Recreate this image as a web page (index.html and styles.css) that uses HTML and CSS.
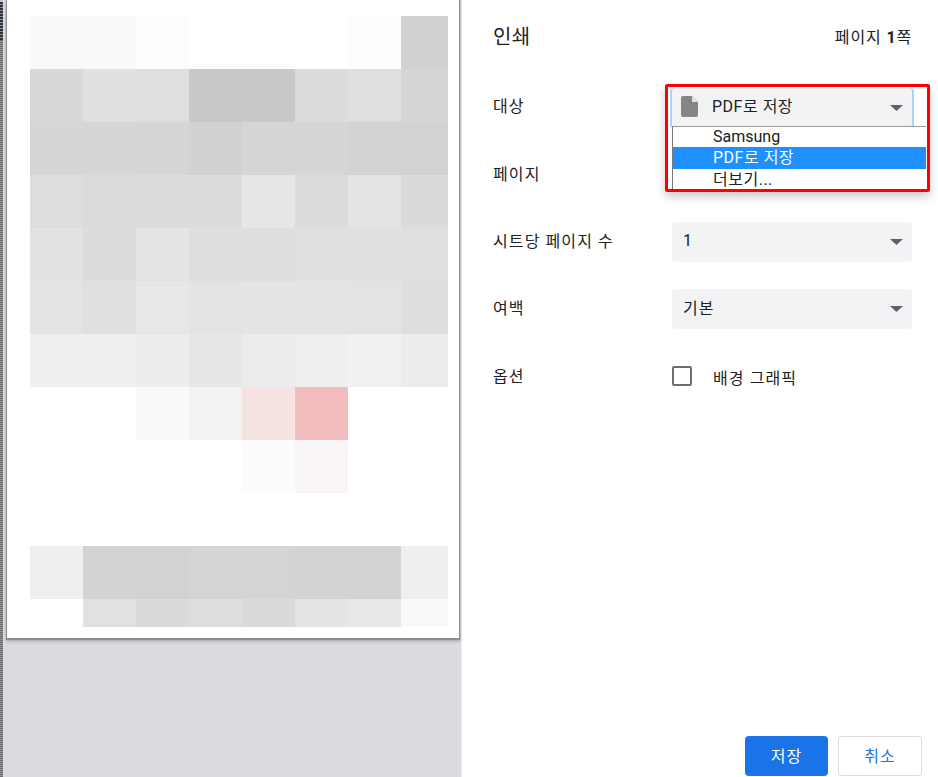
FILE: index.html
```html
<!DOCTYPE html>
<html lang="ko">
<head>
<meta charset="utf-8">
<title>인쇄</title>
<link rel="stylesheet" href="styles.css">
</head>
<body>
<div class="app">
  <div class="rail"><div class="rail-top"></div></div>
  <main class="preview">
    <div class="sheet">
      <div class="mosaic">
        <i class="c-f8 dots"></i><i class="c-fa dots"></i><i class="c-fd"></i><i class="c-ff"></i><i class="c-ff"></i><i class="c-ff"></i><i class="c-fd"></i><i class="c-d1"></i>
        <i class="c-d8"></i><i class="c-df dots"></i><i class="c-de dots"></i><i class="c-c9"></i><i class="c-c9"></i><i class="c-dc"></i><i class="c-de dots"></i><i class="c-d5"></i>
        <i class="c-d6"></i><i class="c-d6"></i><i class="c-d6"></i><i class="c-d0 dots"></i><i class="c-d6"></i><i class="c-d6"></i><i class="c-d3"></i><i class="c-d1 dots"></i>
        <i class="c-dd"></i><i class="c-db"></i><i class="c-dc"></i><i class="c-dc"></i><i class="c-e6 dots"></i><i class="c-db"></i><i class="c-e3 dots"></i><i class="c-da"></i>
        <i class="c-e1 dots"></i><i class="c-dc"></i><i class="c-e3 dots"></i><i class="c-de"></i><i class="c-de"></i><i class="c-e0"></i><i class="c-e0"></i><i class="c-df"></i>
        <i class="c-e4"></i><i class="c-df"></i><i class="c-e7 dots"></i><i class="c-e3"></i><i class="c-e4"></i><i class="c-e4"></i><i class="c-e3"></i><i class="c-de"></i>
        <i class="c-ef dots"></i><i class="c-ee dots"></i><i class="c-ed"></i><i class="c-e6 dots"></i><i class="c-ec dots"></i><i class="c-ee dots"></i><i class="c-f1 dots"></i><i class="c-ec dots"></i>
        <i class="c-ff"></i><i class="c-ff"></i><i class="c-pa dots"></i><i class="c-pb dots"></i><i class="c-pc dots"></i><i class="c-pd"></i><i class="c-ff"></i><i class="c-ff"></i>
        <i class="c-ff"></i><i class="c-ff"></i><i class="c-ff"></i><i class="c-ff"></i><i class="c-fc"></i><i class="c-pe dots"></i><i class="c-ff"></i><i class="c-ff"></i>
        <i class="c-ff"></i><i class="c-ff"></i><i class="c-ff"></i><i class="c-ff"></i><i class="c-ff"></i><i class="c-ff"></i><i class="c-ff"></i><i class="c-ff"></i>
        <i class="c-ee dots"></i><i class="c-d3"></i><i class="c-d1 dots"></i><i class="c-d4"></i><i class="c-d4"></i><i class="c-d3"></i><i class="c-d3"></i><i class="c-ef dots"></i>
        <i class="c-ff"></i><i class="c-e0 dots"></i><i class="c-da"></i><i class="c-de"></i><i class="c-da"></i><i class="c-e4 dots"></i><i class="c-e8 dots"></i><i class="c-f8 dots"></i>
      </div>
    </div>
  </main>
  <aside class="panel">
    <header class="head">
      <h1 class="title">인쇄</h1>
      <p class="count">페이지 <b>1</b>쪽</p>
    </header>
    <div class="rows">
      <span class="label label-first">대상</span>
      <div class="select select-dest">
        <svg class="file" width="17" height="21" viewBox="0 0 17 21"><path fill="#868686" d="M2 0h9l6 6v13a2 2 0 0 1-2 2H2a2 2 0 0 1-2-2V2a2 2 0 0 1 2-2z"/><path fill="#e4e4e4" d="M11 0l6 6h-6z"/></svg>
        <span class="value value-mixed">PDF로 저장</span>
        <svg class="arrow" width="13" height="6" viewBox="0 0 13 6"><path fill="#5f6368" d="M0 0h13L6.500 6z"/></svg>
      </div>
      <span class="label">페이지</span>
      <div class="blank"></div>
      <span class="label">시트당 페이지 수</span>
      <div class="select">
        <span class="value">1</span>
        <svg class="arrow" width="13" height="6" viewBox="0 0 13 6"><path fill="#5f6368" d="M0 0h13L6.500 6z"/></svg>
      </div>
      <span class="label">여백</span>
      <div class="select">
        <span class="value value-ko">기본</span>
        <svg class="arrow" width="13" height="6" viewBox="0 0 13 6"><path fill="#5f6368" d="M0 0h13L6.500 6z"/></svg>
      </div>
      <span class="label label-last">옵션</span>
      <label class="check"><span class="box"></span><span class="check-text">배경 그래픽</span></label>
      <div class="callout">
        <ul class="list">
          <li class="latin">Samsung</li>
          <li class="active">PDF로 저장</li>
          <li class="more">더보기...</li>
        </ul>
      </div>
    </div>
    <footer class="foot">
      <button class="btn primary">저장</button>
      <button class="btn ghost">취소</button>
    </footer>
  </aside>
</div>
</body>
</html>
```
FILE: styles.css
```css
* { box-sizing: border-box; }
html, body { margin: 0; height: 100%; }
body {
  overflow: hidden;
  background: #fff;
  color: #202124;
  font-family: Roboto, "Noto Sans CJK KR", sans-serif;
  font-size: 16px;
  letter-spacing: 1.1px;
}
.app { display: flex; width: 938px; height: 777px; overflow: hidden; }

.rail { width: 4px; flex: none; background: #dadbdf; }
.rail-top {
  width: 3px;
  height: 100%;
  border-top: 2px solid #c4c4c4;
  background: repeating-linear-gradient(0deg, #6e6e6e 0 1px, #939393 1px 2px);
}
.rail-top::before {
  content: "";
  display: block;
  height: 38px;
  background: repeating-linear-gradient(0deg, #2c333b 0 2px, #8b9097 2px 3px);
}

.preview { width: 458px; flex: none; padding-left: 3px; background: #dadbdf; border-right: 1px solid #ebebec; }
.sheet {
  width: 452px;
  height: 638px;
  padding: 16px 0 0 23px;
  background: #fff;
  box-shadow: 0 1px 1px 1px #8e8e92, 0 3px 3px 1px #b8b8bc;
}
.mosaic {
  display: grid;
  grid-template-columns: repeat(7, 53px) 47px;
  grid-template-rows: repeat(11, 53px) 28px;
}
.mosaic i { display: block; }
.dots {
  background-image: radial-gradient(rgba(255, 255, 255, .1) .7px, transparent .8px);
  background-size: 4px 4px;
}
.c-c9 { background-color: #c9c9c9; } .c-d0 { background-color: #d0d0d0; } .c-d1 { background-color: #d1d1d1; }
.c-d3 { background-color: #d3d3d3; } .c-d4 { background-color: #d4d4d4; } .c-d5 { background-color: #d5d5d5; }
.c-d6 { background-color: #d6d6d6; } .c-d8 { background-color: #d8d8d8; } .c-da { background-color: #dadada; }
.c-db { background-color: #dbdbdb; } .c-dc { background-color: #dcdcdc; } .c-dd { background-color: #dddddd; }
.c-de { background-color: #dedede; } .c-df { background-color: #dfdfdf; } .c-e0 { background-color: #e0e0e0; }
.c-e1 { background-color: #e1e1e1; } .c-e3 { background-color: #e3e3e3; } .c-e4 { background-color: #e4e4e4; }
.c-e6 { background-color: #e6e6e6; } .c-e7 { background-color: #e7e7e7; } .c-e8 { background-color: #e8e8e8; }
.c-ec { background-color: #ececec; } .c-ed { background-color: #ededed; } .c-ee { background-color: #eeeeee; }
.c-ef { background-color: #efefef; } .c-f1 { background-color: #f1f1f1; } .c-f8 { background-color: #f8f8f8; }
.c-fa { background-color: #faf8f8; } .c-fc { background-color: #fcfcfc; } .c-fd { background-color: #fdfdfd; }
.c-ff { background-color: #ffffff; } .c-pa { background-color: #fbf9f9; } .c-pb { background-color: #f1f2f3; }
.c-pc { background-color: #f5e3e1; } .c-pd { background-color: #f2bdbf; } .c-pe { background-color: #f9f4f5; }

.panel { flex: 1; display: flex; flex-direction: column; padding: 0 26px 1px 31px; background: #fff; }
.head { display: flex; justify-content: space-between; align-items: center; height: 72px; }
.title { margin: 0 0 2px; font-size: 20px; font-weight: 400; letter-spacing: .4px; }
.count { margin: 0; font-size: 16px; letter-spacing: .85px; }
.count b { font-weight: 700; }

.rows {
  position: relative;
  display: grid;
  grid-template-columns: 179px 240px;
  grid-auto-rows: 40px;
  row-gap: 27px;
  margin-top: 16px;
  align-items: center;
}
.label { padding-bottom: 5px; }
.label-first { padding-bottom: 6px; }
.label-last { padding-bottom: 3px; }
.select {
  display: flex;
  align-items: center;
  height: 40px;
  padding: 0 9px 0 11px;
  background: #f1f3f4;
  border-radius: 4px;
}
.value { flex: 1; padding-bottom: 3px; }
.value-ko { padding-bottom: 5px; }
.value-mixed { letter-spacing: .5px; padding-bottom: 7px; }
.arrow { flex: none; }
.select-dest {
  border-left: 2px solid #a6d3fb;
  border-right: 2px solid #a6d3fb;
  margin: 0 -2px;
  padding-left: 9px;
  padding-right: 9px;
}
.select-dest .value { margin-left: 14px; }
.file { flex: none; margin-bottom: 3px; }
.blank { height: 40px; }

.check { display: flex; align-items: center; }
.box { width: 20px; height: 20px; border: 2px solid #6e6e6e; border-radius: 2px; }
.check-text { margin-left: 21px; padding-top: 1px; }

.callout {
  position: absolute;
  left: 172px;
  top: -4px;
  width: 265px;
  height: 108px;
  border: 3px solid #f00;
  border-radius: 2px;
  box-shadow: 0 5px 10px rgba(0, 0, 0, .2);
  overflow: hidden;
}
.list {
  list-style: none;
  margin: 39px 0 0 4px;
  padding: 0;
  width: 254px;
  height: 70px;
  background: #fff;
  border-left: 1px solid #777;
  border-top: 1px solid #999;
  letter-spacing: .5px;
}
.list li { height: 20px; padding-left: 40px; line-height: 20px; }
.list li.latin { letter-spacing: 0; }
.list li.active { height: 22px; line-height: 22px; background: #1e90ff; color: #fff; }
.list li.more { padding-top: 1px; }

.foot { margin-top: auto; margin-right: -10px; display: flex; justify-content: flex-end; gap: 10px; }
.btn { height: 40px; border-radius: 4px; font: inherit; letter-spacing: inherit; padding: 0 0 3px; }
.primary { width: 83px; border: 0; background: #1a73e8; color: #fff; }
.ghost { width: 84px; border: 1px solid #dadce0; background: #fff; color: #1a73e8; }
```
